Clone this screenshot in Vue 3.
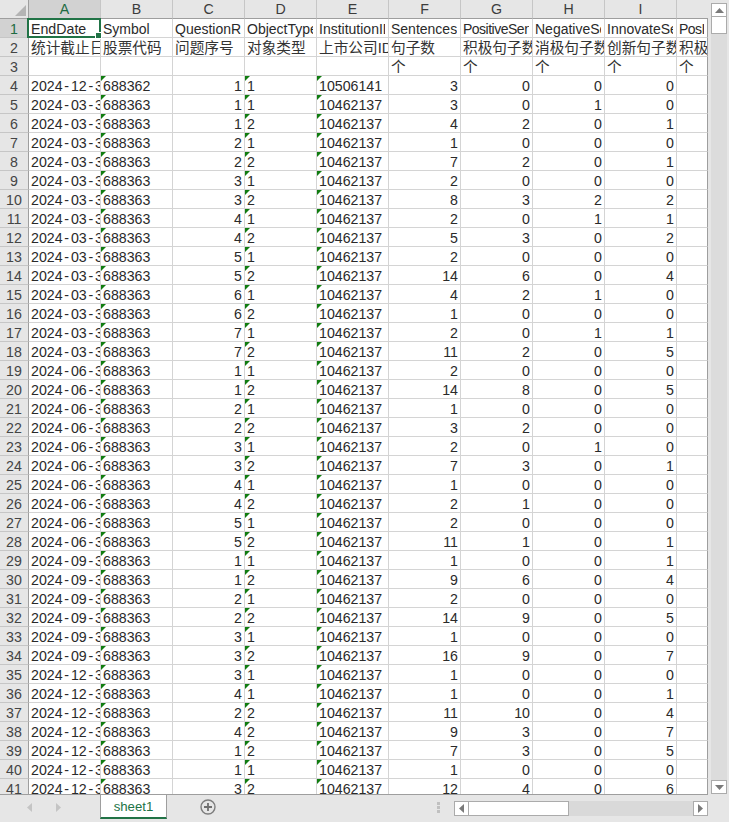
<script setup>
const letters = ['A','B','C','D','E','F','G','H','I','']
const raw = `12 2 1 1 3 0 0 0
03 3 1 1 3 0 1 0
03 3 1 2 4 2 0 1
03 3 2 1 1 0 0 0
03 3 2 2 7 2 0 1
03 3 3 1 2 0 0 0
03 3 3 2 8 3 2 2
03 3 4 1 2 0 1 1
03 3 4 2 5 3 0 2
03 3 5 1 2 0 0 0
03 3 5 2 14 6 0 4
03 3 6 1 4 2 1 0
03 3 6 2 1 0 0 0
03 3 7 1 2 0 1 1
03 3 7 2 11 2 0 5
06 3 1 1 2 0 0 0
06 3 1 2 14 8 0 5
06 3 2 1 1 0 0 0
06 3 2 2 3 2 0 0
06 3 3 1 2 0 1 0
06 3 3 2 7 3 0 1
06 3 4 1 1 0 0 0
06 3 4 2 2 1 0 0
06 3 5 1 2 0 0 0
06 3 5 2 11 1 0 1
09 3 1 1 1 0 0 1
09 3 1 2 9 6 0 4
09 3 2 1 2 0 0 0
09 3 2 2 14 9 0 5
09 3 3 1 1 0 0 0
09 3 3 2 16 9 0 7
12 3 3 1 1 0 0 0
12 3 4 1 1 0 0 1
12 3 2 2 11 10 0 4
12 3 4 2 9 3 0 7
12 3 1 2 7 3 0 5
12 3 1 1 1 0 0 0
12 3 3 2 12 4 0 6`
const rows = raw.split('\n').map((line, i) => {
  const p = line.split(' ')
  return {
    n: i + 4,
    month: p[0],
    symbol: `68836${p[1]}`,
    q: p[2],
    type: p[3],
    inst: i === 0 ? '10506141' : '10462137',
    vals: p.slice(4)
  }
})
const head1 = ['Symbol','QuestionRank','ObjectType','InstitutionID','Sentences','PositiveSentences','NegativeSentences','InnovateSentences','PosI']
const head2 = ['股票代码','问题序号','对象类型','上市公司ID','句子数','积极句子数','消极句子数','创新句子数','积极']
</script>

<template>
  <div class="app">
    <div class="top">
      <div class="grid">
        <div class="hd corner"><span class="tri"></span></div>
        <div v-for="(l, i) in letters" :key="'h' + i" class="hd col" :class="{ on: i === 0, bare: i === 9 }">{{ l }}</div>

        <div class="hd row on">1</div>
        <div class="c sel">EndDate<span class="box"><span class="handle"></span></span></div>
        <div v-for="(t, i) in head1" :key="t" class="c" :class="{ end: i === 8 }"><span class="t" :class="{ tight: i === 5 || i === 8 }">{{ t }}</span></div>

        <div class="hd row">2</div>
        <div class="c cjk">统计截止日期</div>
        <div v-for="(t, i) in head2" :key="t" class="c cjk" :class="{ end: i === 8 }">{{ t }}</div>

        <div class="hd row">3</div>
        <div class="c"></div><div class="c"></div><div class="c"></div><div class="c"></div><div class="c"></div>
        <div class="c cjk">个</div><div class="c cjk">个</div><div class="c cjk">个</div><div class="c cjk">个</div><div class="c cjk end">个</div>

        <template v-for="r in rows" :key="r.n">
          <div class="hd row">{{ r.n }}</div>
          <div class="c">2024<span class="hy">-</span>{{ r.month }}<span class="hy">-</span>31</div>
          <div class="c flag">{{ r.symbol }}</div>
          <div class="c num">{{ r.q }}</div>
          <div class="c flag">{{ r.type }}</div>
          <div class="c flag">{{ r.inst }}</div>
          <div v-for="(v, i) in r.vals" :key="i" class="c num">{{ v }}</div>
          <div class="c end"></div>
        </template>
      </div>

      <div class="vbar">
        <div class="vbtn"><svg width="9" height="5" viewBox="0 0 9 5"><path d="M4.5 0 L9 5 H0 Z" fill="#7a7a7a"/></svg></div>
        <div class="vthumb"></div>
        <div class="vtrack"></div>
        <div class="vbtn"><svg width="9" height="5" viewBox="0 0 9 5"><path d="M0 0 H9 L4.5 5 Z" fill="#7a7a7a"/></svg></div>
      </div>
    </div>

    <div class="bottom">
      <div class="nav">
        <svg width="5" height="9" viewBox="0 0 5 9"><path d="M5 0 V9 L0 4.5 Z" fill="#c4c4c4"/></svg>
        <svg width="5" height="9" viewBox="0 0 5 9"><path d="M0 0 V9 L5 4.5 Z" fill="#c4c4c4"/></svg>
      </div>
      <div class="tab">sheet1</div>
      <div class="add">
        <svg width="16" height="16" viewBox="0 0 16 16">
          <circle cx="8" cy="8" r="7" fill="none" stroke="#7d7d7d" stroke-width="1.4"/>
          <path d="M8 4 V12 M4 8 H12" stroke="#6f6f6f" stroke-width="1.8"/>
        </svg>
      </div>
      <div class="dots"><i></i><i></i><i></i></div>
      <div class="hbar">
        <div class="hbtn"><svg width="5" height="9" viewBox="0 0 5 9"><path d="M5 0 V9 L0 4.5 Z" fill="#7a7a7a"/></svg></div>
        <div class="hthumb"></div>
        <div class="htrack"></div>
        <div class="hbtn"><svg width="5" height="9" viewBox="0 0 5 9"><path d="M0 0 V9 L5 4.5 Z" fill="#7a7a7a"/></svg></div>
      </div>
    </div>
  </div>
</template>

<style>
html, body { margin: 0; overflow: hidden; }
</style>

<style scoped>
.app {
  width: 729px;
  height: 822px;
  display: flex;
  flex-direction: column;
  background: #e6e6e6;
  overflow: hidden;
  font-family: "Liberation Sans", "Noto Sans CJK SC", sans-serif;
  font-size: 14.2px;
  color: #2a2a2a;
}
.top {
  flex: none;
  height: 795px;
  display: flex;
  align-items: flex-start;
  overflow: hidden;
}
.grid {
  flex: none;
  width: 708px;
  height: 795px;
  box-sizing: border-box;
  overflow: hidden;
  display: grid;
  grid-template-columns: 29px repeat(9, 72px) 31px;
  grid-auto-rows: 19px;
  background: #fff;
  align-content: start;
  border-bottom: 1px solid #9e9e9e;
}
.hd {
  background: #e6e6e6;
  box-sizing: border-box;
  text-align: center;
  line-height: 19px;
  color: #444;
  overflow: hidden;
}
.col {
  border-right: 1px solid #c6c6c6;
  border-bottom: 1px solid #9e9e9e;
  color: #3c3c3c;
}
.col.bare { border-right: 0; }
.row {
  border-right: 1px solid #9e9e9e;
  border-bottom: 1px solid #c6c6c6;
  line-height: 20px;
}
.col.on, .row.on {
  background: #d2d2d2;
  color: #1e6b42;
}
.corner {
  position: relative;
  border-right: 1px solid #9e9e9e;
  border-bottom: 1px solid #9e9e9e;
}
.tri {
  position: absolute;
  right: 2px;
  bottom: 2px;
  width: 0;
  height: 0;
  border-style: solid;
  border-width: 0 0 11px 11px;
  border-color: transparent transparent #b4b4b4 transparent;
}
.c {
  position: relative;
  box-sizing: border-box;
  border-right: 1px solid #d4d4d4;
  border-bottom: 1px solid #d4d4d4;
  padding: 0 1px 0 2px;
  line-height: 20px;
  white-space: nowrap;
  overflow: hidden;
}
.c.end { border-right-color: #9e9e9e; }
.t {
  display: block;
  overflow: hidden;
  height: 18px;
  margin-right: 2px;
  font-size: 14px;
}
.t.tight { letter-spacing: -0.5px; }
.hy { margin: 0 1.8px; }
.sel { overflow: visible; z-index: 2; }
.box {
  position: absolute;
  left: -2px;
  top: -1px;
  width: 74px;
  height: 20px;
  box-sizing: border-box;
  border: 2px solid #217346;
}
.handle {
  position: absolute;
  right: -3px;
  bottom: -3px;
  width: 5px;
  height: 5px;
  background: #217346;
  border: 1px solid #fff;
}
.cjk { font-size: 14.67px; line-height: 21px; color: #333; }
.num { text-align: right; padding-right: 2px; }
.flag::before {
  content: "";
  position: absolute;
  left: 0;
  top: 0;
  width: 0;
  height: 0;
  border-style: solid;
  border-width: 5px 5px 0 0;
  border-color: #107c10 transparent transparent transparent;
}
.vbar {
  flex: none;
  margin: 3px 0 0 3px;
  width: 16px;
  height: 791px;
  display: flex;
  flex-direction: column;
  box-sizing: border-box;
  background: #dcdcdc;
}
.vbtn {
  flex: none;
  height: 14px;
  background: #fff;
  border: 1px solid #ababab;
  box-sizing: border-box;
  display: flex;
  align-items: center;
  justify-content: center;
}
.vthumb {
  flex: none;
  height: 17px;
  background: #fff;
  border: 1px solid #ababab;
  border-top: 0;
  box-sizing: border-box;
}
.vtrack { flex: 1; }
.bottom {
  flex: none;
  height: 27px;
  display: flex;
  align-items: flex-start;
  background: #e6e6e6;
}
.nav {
  flex: none;
  width: 100px;
  height: 25px;
  padding-left: 27px;
  box-sizing: border-box;
  display: flex;
  align-items: center;
  gap: 24px;
}
.tab {
  flex: none;
  width: 67px;
  height: 24px;
  box-sizing: border-box;
  background: #fff;
  border: 1px solid #9e9e9e;
  border-top: 0;
  border-bottom: 2px solid #217346;
  color: #217346;
  text-align: center;
  line-height: 23px;
  font-size: 13.2px;
}
.add {
  flex: none;
  width: 16px;
  height: 16px;
  margin: 4px 0 0 33px;
}
.dots {
  flex: none;
  width: 3px;
  margin: 7px 0 0 221px;
  display: flex;
  flex-direction: column;
  gap: 1px;
}
.dots i { display: block; width: 3px; height: 3px; background: #c0c0c0; }
.hbar {
  flex: none;
  width: 254px;
  height: 15px;
  margin: 6px 0 0 14px;
  display: flex;
  background: #d9d9d9;
}
.hbtn {
  flex: none;
  width: 15px;
  height: 15px;
  background: #fff;
  border: 1px solid #ababab;
  box-sizing: border-box;
  display: flex;
  align-items: center;
  justify-content: center;
}
.hthumb {
  flex: none;
  width: 100px;
  height: 15px;
  background: #fff;
  border: 1px solid #ababab;
  border-left: 0;
  box-sizing: border-box;
}
.htrack { flex: 1; }
</style>
